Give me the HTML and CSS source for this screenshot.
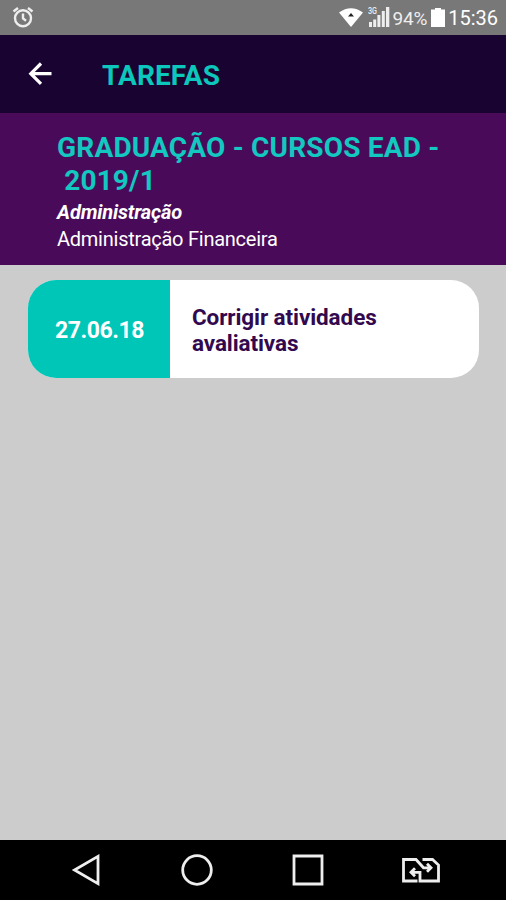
FILE: index.html
```html
<!DOCTYPE html>
<html lang="pt-BR">
  <head>
    <meta charset="utf-8" />
    <title>Tarefas</title>
    <link rel="stylesheet" href="styles.css">
  </head>
  <body>
    <!--status bar-->
    <div class="status">
      <svg class="alarm" width="22" height="22" viewBox="0 0 22 22">
        <circle cx="11" cy="12.3" r="8" />
        <path d="M11 7.5V12.5L14 14.8M1.5 5.5L6 2M20.5 5.5L16 2" />
      </svg>
      <div class="status-right">
        <svg class="wifi" width="24" height="19" viewBox="0 0 24 19">
          <path d="M0 4.5Q12 -4 24 4.5L12 19Z" fill="#fff" />
          <path d="M9 8.5L12 5L15 8.5Z" fill="#222" />
        </svg>
        <svg class="signal" width="22" height="21" viewBox="0 0 22 21">
          <path d="M1 16H4V21H1ZM5.2 13.5H8.2V21H5.2ZM9.4 9H12.4V21H9.4ZM13.8 5H16.8V21H13.8ZM18 1H21.3V21H18Z" fill="#eee" />
          <text x="0" y="8" font-size="9" font-weight="500" textLength="9" lengthAdjust="spacingAndGlyphs" fill="#eee">3G</text>
        </svg>
        <span class="percent">94%</span>
        <svg class="battery" width="14" height="19" viewBox="0 0 14 19">
          <path d="M4 0H10V1.5H14V19H0V1.5H4Z" fill="#fff" />
        </svg>
        <span class="clock">15:36</span>
      </div>
    </div>

    <div class="header">
      <svg class="back" width="24" height="24" viewBox="0 0 24 24">
        <path d="M23.5 11.7H2.8M13 1.5L2.8 11.7L13 21.9" />
      </svg>
      <div class="title">TAREFAS</div>
    </div>

    <div class="course">
      <div class="course-name">GRADUAÇÃO - CURSOS EAD -<br>&nbsp;2019/1</div>
      <div class="area">Administração</div>
      <div class="subject">Administração Financeira</div>
    </div>

    <div class="content">
      <div class="task">
        <div class="date">27.06.18</div>
        <div class="text">Corrigir atividades<br>avaliativas</div>
      </div>
    </div>

    <!--navigation bar-->
    <div class="nav">
      <svg width="32" height="32" viewBox="0 0 32 32">
        <path d="M27 2.4V29.6L3.5 16Z" />
      </svg>
      <svg width="32" height="32" viewBox="0 0 32 32">
        <circle cx="16" cy="16" r="14.3" />
      </svg>
      <svg width="32" height="32" viewBox="0 0 32 32">
        <path d="M2 2H30V30H2Z" />
      </svg>
      <svg width="38" height="32" viewBox="0 0 38 32">
        <path d="M15.5 27H1.5V5.5H14L21.5 13.8H28M20.5 5.5H30.5L36.5 11V27H18V18.3H10M25 9.8L29 13.8L25 17.8M13 14.3L9 18.3L13 22.3" />
      </svg>
    </div>
  </body>
</html>
```
FILE: styles.css
```css
* {
  padding: 0;
  margin: 0;
  box-sizing: border-box;
}
body {
  display: flex;
  flex-direction: column;
  height: 100vh;
  background-color: #cccccc;
  font-family: Roboto, sans-serif;
  overflow: hidden;
}
svg {
  flex: none;
  fill: none;
  stroke: none;
}

/*status bar*/
.status {
  display: flex;
  justify-content: space-between;
  height: 35px;
  padding: 6px 8px 0 12px;
  background-color: #787878;
  color: #fff;
}
.alarm {
  stroke: #eee;
  stroke-width: 2.4;
}
.status-right {
  display: flex;
  align-items: flex-start;
}
.wifi {
  margin-top: 2px;
}
.signal {
  margin-left: 5px;
}
.percent {
  margin-left: 3px;
  font-size: 19px;
  line-height: 25px;
  letter-spacing: -0.2px;
  color: #eee;
}
.battery {
  margin: 2px 3px 0 4px;
}
.clock {
  font-size: 20px;
  line-height: 25px;
}

.header {
  display: flex;
  align-items: center;
  height: 78px;
  padding-left: 28px;
  background-color: #190330;
}
.back {
  stroke: #fff;
  stroke-width: 3.2;
}
.title {
  margin: 2px 0 0 50px;
  font-size: 28px;
  font-weight: 700;
  letter-spacing: 0.1px;
  color: #0cc7bb;
}

.course {
  height: 152px;
  padding: 18px 0 0 57px;
  background-color: #490b59;
  color: #fff;
}
.course-name {
  font-size: 28px;
  font-weight: 700;
  line-height: 33px;
  letter-spacing: 0.18px;
  color: #12c8c0;
}
.area {
  margin-top: 2px;
  font-size: 20px;
  font-weight: 700;
  font-style: italic;
  line-height: 27px;
  letter-spacing: -0.15px;
}
.subject {
  font-size: 20px;
  line-height: 26px;
  letter-spacing: -0.25px;
}

.content {
  flex: 1;
  padding: 15px 27px 0 28px;
}
.task {
  display: flex;
  height: 98px;
  border-radius: 28px;
  background-color: #fff;
  overflow: hidden;
}
.date {
  display: flex;
  align-items: center;
  width: 142px;
  padding: 2px 0 0 27px;
  background-color: #00c6b8;
  color: #fff;
  font-size: 23px;
  font-weight: 700;
  letter-spacing: -0.45px;
}
.text {
  padding: 24px 0 0 22px;
  font-size: 22.5px;
  font-weight: 700;
  line-height: 26px;
  letter-spacing: -0.1px;
  color: #32094f;
}

/*navigation bar*/
.nav {
  display: flex;
  justify-content: space-between;
  align-items: center;
  height: 60px;
  padding: 0 66px 0 71px;
  background-color: #000;
}
.nav svg {
  stroke: #eee;
  stroke-width: 2.8;
}
```
